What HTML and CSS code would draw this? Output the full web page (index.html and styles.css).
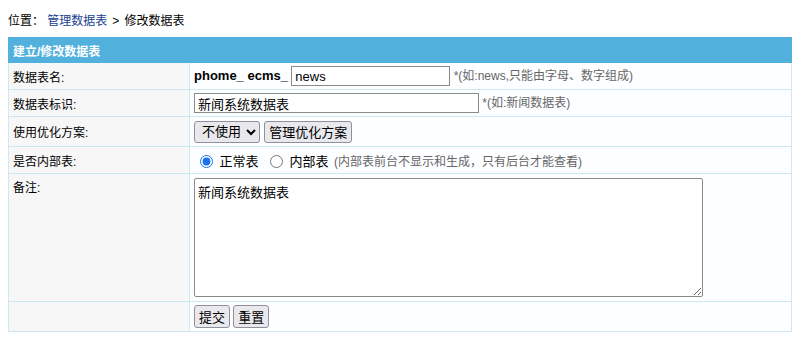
FILE: index.html
```html
<!DOCTYPE html>
<html lang="zh-CN">
<head>
    <meta charset="UTF-8" />
    <title>修改数据表</title>
    <link rel="stylesheet" href="styles.css">
</head>
<body>
    <div class="nav">位置：&nbsp;<a href="#">管理数据表</a><span class="sep">&gt;</span>修改数据表</div>

    <form name="form1" class="tbform">
        <table class="tableborder">
            <tr class="header">
                <td colspan="2">建立/修改数据表</td>
            </tr>
            <tr>
                <td class="label">数据表名:</td>
                <td class="value">
                    <b class="prefix">phome_ ecms_</b>
                    <input type="text" name="tbname" value="news" class="in-tbname" />
                    <span class="tip">*(如:news,只能由字母、数字组成)</span>
                </td>
            </tr>
            <tr>
                <td class="label">数据表标识:</td>
                <td class="value">
                    <input type="text" name="tname" value="新闻系统数据表" class="in-tname" />
                    <span class="tip">*(如:新闻数据表)</span>
                </td>
            </tr>
            <tr class="tall">
                <td class="label">使用优化方案:</td>
                <td class="value">
                    <select name="yhid"><option>不使用</option></select>
                    <button type="button">管理优化方案</button>
                </td>
            </tr>
            <tr>
                <td class="label">是否内部表:</td>
                <td class="value">
                    <label class="radio"><input type="radio" name="intb" checked /> 正常表</label>
                    <label class="radio"><input type="radio" name="intb" /> 内部表</label>
                    <span class="tip">(内部表前台不显示和生成，只有后台才能查看)</span>
                </td>
            </tr>
            <tr>
                <td class="label top">备注:</td>
                <td class="value">
                    <textarea name="tbsay">新闻系统数据表</textarea>
                </td>
            </tr>
            <tr class="tall">
                <td class="label"></td>
                <td class="value">
                    <button type="submit" class="btn-big">提交</button>
                    <button type="reset" class="btn-big">重置</button>
                </td>
            </tr>
        </table>
    </form>
</body>
</html>
```

FILE: styles.css
```css
body {
    margin: 8px;
    font-family: "Liberation Sans", "Noto Sans CJK SC", sans-serif;
    font-size: 12px;
    color: #000;
    background: #fff;
}

.nav {
    height: 22px;
    padding-top: 3px;
    margin-bottom: 4px;
}

.nav a {
    color: #183e8e;
    text-decoration: none;
}

.nav .sep {
    margin: 0 5px;
}

.tableborder {
    width: 100%;
    border-collapse: collapse;
    border: 1px solid #62b9e0;
}

.tableborder td {
    border: 1px solid #cde8f4;
    padding: 0 4px;
    height: 26px;
}

.header td {
    background: #52b1dc;
    color: #fff;
    font-weight: bold;
    border-color: #52b1dc;
    height: 24px;
}

.label {
    width: 172px;
    background: #f7f7f7;
}

.label.top {
    vertical-align: top;
    padding-top: 4px;
}

.value {
    background: #fdfeff;
}

.tall td {
    height: 29px;
}

.prefix {
    font-size: 13px;
}

input[type="text"] {
    font-family: "Liberation Sans", "Noto Sans CJK SC", sans-serif;
    font-size: 13px;
    height: 20px;
    box-sizing: border-box;
    border: 1px solid #8a8a8a;
    padding: 1px 3px;
    vertical-align: middle;
}

.in-tbname {
    width: 159px;
}

.in-tname {
    width: 285px;
}

.tip {
    color: #666;
}

select,
button {
    font-family: "Liberation Sans", "Noto Sans CJK SC", sans-serif;
    font-size: 13px;
    height: 22px;
    border: 1px solid #8f8f9d;
    border-radius: 3px;
    background: #e9e9ed;
    color: #000;
    padding: 0 4px;
    vertical-align: middle;
}

select {
    width: 66px;
    padding: 0 0 0 3px;
    margin-right: 1px;
}

.btn-big {
    height: 23px;
    padding: 0 4px;
}

.radio {
    margin-left: 3px;
    margin-right: 2px;
    font-size: 13px;
}

.radio input {
    accent-color: #1a73e8;
    margin: 0 3px 0 3px;
    vertical-align: -2px;
}

textarea {
    font-family: "Liberation Sans", "Noto Sans CJK SC", sans-serif;
    font-size: 13px;
    width: 509px;
    height: 119px;
    box-sizing: border-box;
    border: 1px solid #8a8a8a;
    border-radius: 2px;
    padding: 3px;
    margin: 4px 0 4px;
    vertical-align: top;
}
```
